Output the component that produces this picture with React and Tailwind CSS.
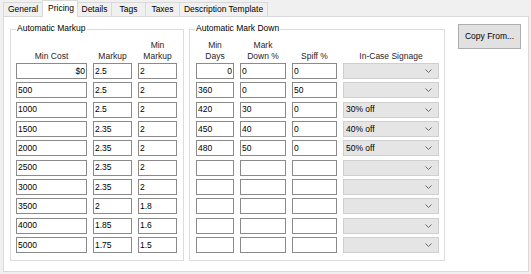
import React from "react";

const tabs = [
  { label: "General", w: "w-[40px]" },
  { label: "Pricing", w: "w-[36px]", active: true },
  { label: "Details", w: "w-[35px]" },
  { label: "Tags", w: "w-[35px]" },
  { label: "Taxes", w: "w-[35px]" },
  { label: "Description Template", w: "w-[89px]" },
];

const markup = [
  ["$0", "2.5", "2"],
  ["500", "2.5", "2"],
  ["1000", "2.5", "2"],
  ["1500", "2.35", "2"],
  ["2000", "2.35", "2"],
  ["2500", "2.35", "2"],
  ["3000", "2.35", "2"],
  ["3500", "2", "1.8"],
  ["4000", "1.85", "1.6"],
  ["5000", "1.75", "1.5"],
];

const markdown = [
  ["0", "0", "0", ""],
  ["360", "0", "50", ""],
  ["420", "30", "0", "30% off"],
  ["450", "40", "0", "40% off"],
  ["480", "50", "0", "50% off"],
  ["", "", "", ""],
  ["", "", "", ""],
  ["", "", "", ""],
  ["", "", "", ""],
  ["", "", "", ""],
];

const Box = ({ value, right }) => (
  <div
    className={
      "h-[16px] border border-[#8a8a8a] bg-white flex items-center px-[1px] leading-none text-black " +
      (right ? "justify-end" : "justify-start")
    }
  >
    {value}
  </div>
);

const Select = ({ value }) => (
  <div className="h-[16px] border border-[#cfcfcf] bg-[#e5e5e5] flex items-center justify-between pl-[2px] pr-[6px] leading-none text-black">
    <span>{value}</span>
    <svg width="7" height="4" viewBox="0 0 7 4">
      <polyline points="0.5,0.5 3.5,3.5 6.5,0.5" fill="none" stroke="#6a6a6a" strokeWidth="1" />
    </svg>
  </div>
);

const Group = ({ title, className, children }) => (
  <div className={"relative mt-[5px] h-[232px] border border-[#dcdcdc] " + className}>
    <span className="absolute top-[-7px] left-[5px] bg-white px-[1px] leading-[11px] text-black">
      {title}
    </span>
    {children}
  </div>
);

const Head = ({ children }) => (
  <div className="h-[23px] flex items-end justify-center text-center leading-[11px] text-[#2a2228]">
    <span>{children}</span>
  </div>
);

export default function App() {
  return (
    <div className="w-[531px] h-[274px] bg-[#f0f0f0] font-['Liberation_Sans',Arial,sans-serif] text-[8.5px] overflow-hidden">
      {/* tab strip */}
      <div className="flex items-end h-[16px] pl-[3px]">
        {tabs.map((t, i) => (
          <div
            key={t.label}
            className={
              t.w +
              " flex items-center border-t border-l border-r border-[#d9d9d9] text-black leading-none " +
              (i > 0 ? "-ml-px " : "") +
              (t.active
                ? "relative z-10 h-[17px] -mb-px bg-white pl-[5px] pb-[2px]"
                : "h-[14px] bg-[#f0f0f0] justify-center")
            }
          >
            {t.label}
          </div>
        ))}
      </div>

      {/* panel */}
      <div className="ml-[3px] w-[526px] h-[256px] border border-[#d9d9d9] bg-white flex items-start gap-[5px] pl-[6px] pt-[7px]">
        <Group title="Automatic Markup" className="w-[174px] pl-[5px] pt-[9px]">
          <div className="grid grid-cols-[71px_39px_39px] gap-x-[6px]">
            <Head>Min Cost</Head>
            <Head>Markup</Head>
            <Head>
              Min
              <br />
              Markup
            </Head>
          </div>
          <div className="mt-[1px] grid grid-cols-[71px_39px_39px] gap-x-[6px] auto-rows-[16px] gap-y-[3.33px]">
            {markup.map((r, i) => (
              <React.Fragment key={i}>
                <Box value={r[0]} right={i === 0} />
                <Box value={r[1]} />
                <Box value={r[2]} />
              </React.Fragment>
            ))}
          </div>
        </Group>

        <Group title="Automatic Mark Down" className="w-[256px] pl-[6px] pt-[9px]">
          <div className="grid grid-cols-[38px_46px_45px_96px] gap-x-[6px]">
            <Head>
              Min
              <br />
              Days
            </Head>
            <Head>
              Mark
              <br />
              Down %
            </Head>
            <Head>Spiff %</Head>
            <Head>In-Case Signage</Head>
          </div>
          <div className="mt-[1px] grid grid-cols-[38px_46px_45px_96px] gap-x-[6px] auto-rows-[16px] gap-y-[3.33px]">
            {markdown.map((r, i) => (
              <React.Fragment key={i}>
                <Box value={r[0]} right={i === 0} />
                <Box value={r[1]} />
                <Box value={r[2]} />
                <Select value={r[3]} />
              </React.Fragment>
            ))}
          </div>
        </Group>

        <button className="ml-[8px] w-[63px] h-[25px] border border-[#adadad] bg-[#e1e1e1] text-black leading-none">
          Copy From...
        </button>
      </div>
    </div>
  );
}
